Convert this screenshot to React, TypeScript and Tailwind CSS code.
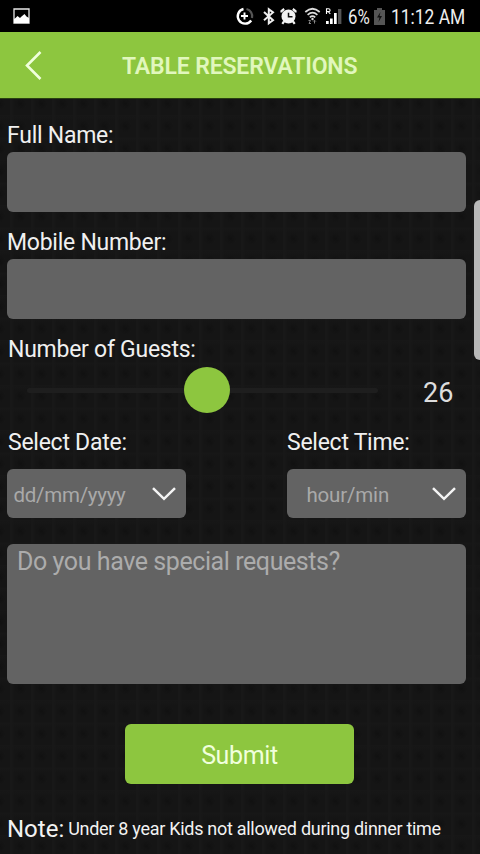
import React from "react";

function StatusIcons() {
  return (
    <svg className="h-[32px] w-[108px] shrink-0" viewBox="234 0 108 32" fill="none">
      <path d="M243.5 9A7.4 7.4 0 1 0 251.2 20.5" stroke="#fff" strokeWidth="2.4" />
      <path d="M246.5 9A7.4 7.4 0 0 1 252 18" stroke="#555" strokeWidth="2.2" />
      <path d="M244.5 12.5v7M241 16h7" stroke="#fff" strokeWidth="1.9" />
      <path d="M264 12l9 8.2-4.2 3V9.2l4.2 3.2-9 7.8" stroke="#eee" strokeWidth="2" />
      <circle cx="288.5" cy="16.5" r="7" fill="#f4f4f4" />
      <path d="M281.5 12.5v-1.5l2.7-2M295.5 12.5v-1.5l-2.7-2M284 21.5l-1.7 2.3M293 21.5l1.7 2.3" stroke="#f4f4f4" strokeWidth="2.2" />
      <path d="M288.5 12.8v4h4" stroke="#111" strokeWidth="1.5" />
      <path d="M305.3 12q7.2-6.5 14.4 0M307.6 14.8q4.9-4.4 9.8 0M309.8 17.3q2.7-2.4 5.4 0" stroke="#ddd" strokeWidth="1.7" />
      <circle cx="312.5" cy="19" r="1.2" fill="#ddd" />
      <path d="M308.5 20.5h2l-1.5 3h2M314.5 23.5v-3M313.2 21.5l1.3-1.3 1.3 1.3" stroke="#888" strokeWidth="1" />
      <path d="M326 24v-3h2.7v3zM330 24v-5.5h2.7V24zM334 24V13h2.7v11z" fill="#fff" />
      <path d="M338 24V9h3.4v15z" fill="#555" />
      <path d="M326.5 14V8.8h2q1.6 0 1.6 1.4t-1.6 1.4h-2M328.3 11.6l2 2.4" stroke="#fff" strokeWidth="1.1" />
    </svg>
  );
}

function StatusBar() {
  return (
    <div className="flex h-[32px] w-full items-center bg-black text-[20px] text-[#eee]">
      <svg className="ml-[13px] h-[16px] w-[17px] shrink-0" viewBox="0 0 17 16">
        <path d="M1 1h15v14H1z" fill="none" stroke="#e8e8e8" strokeWidth="1.3" />
        <path d="M1 15v-4l1.5-1L4.5 8 7 10l1.5-1.5L11.5 6l2 2.5L16 10v5z" fill="#fff" />
      </svg>
      <div className="ml-[204px]"><StatusIcons /></div>
      <span className="ml-[6px] mt-[2px] w-[21px] origin-left scale-x-[0.84] whitespace-nowrap">6%</span>
      <svg className="ml-[5px] h-[17px] w-[11px] shrink-0" viewBox="0 0 11 17">
        <path d="M3 0h5v2h3v15H0V2h3z" fill="#555" />
        <path d="M6.5 4L3 9.5h2.5L4.5 14 8 8H5.5z" fill="#111" />
      </svg>
      <span className="ml-[6px] mt-[2px] w-[75px] origin-left scale-x-[0.87] whitespace-nowrap">11:12 AM</span>
    </div>
  );
}

function Label({ children }: { children: React.ReactNode }) {
  return <div className="h-[28px] whitespace-nowrap text-[23px] leading-[29px] tracking-[-0.26px] text-[#f0f0f0]">{children}</div>;
}

function Picker({ text, inset }: { text: string; inset?: boolean }) {
  return (
    <div className="flex h-[49px] w-[179px] items-center justify-between rounded-[6px] bg-[#636363] pr-[10px]">
      <span className={inset ? "pl-[19.5px] pt-[3px] text-[20.5px] tracking-[-0.18px] text-[#a9a9a9]" : "pl-[6.5px] pt-[3px] text-[20.5px] tracking-[-0.28px] text-[#a9a9a9]"}>{text}</span>
      <svg className="h-[14px] w-[24px]" viewBox="0 0 24 14" fill="none">
        <path d="M1 1.2L12 11.8 23 1.2" stroke="#f4f4f4" strokeWidth="2.5" />
      </svg>
    </div>
  );
}

export default function App() {
  return (
    <div className="relative flex h-[854px] w-[480px] flex-col overflow-hidden bg-[#151515] font-[Roboto,sans-serif]">
      <StatusBar />
      <header className="flex h-[67px] items-center border-b border-[#294010] bg-[#8dc63f]">
        <svg className="ml-[24px] h-[30px] w-[20px]" viewBox="0 0 20 30" fill="none">
          <path d="M16.5 2L3 15.5 16.5 29" stroke="#f0ffdc" strokeWidth="2.6" />
        </svg>
        <h1 className="ml-[78px] mt-[3px] whitespace-nowrap text-[23px] font-semibold leading-[28px] tracking-[-0.15px] text-[#e1f7bd]">TABLE RESERVATIONS</h1>
      </header>
      <main className="flex-1 bg-[radial-gradient(circle_at_50%_50%,#0d0d0d99_0,#0d0d0d55_2px,transparent_6px),linear-gradient(90deg,#181818_1px,transparent_5px),linear-gradient(#171717_1px,transparent_5px)] bg-[size:21px_22.5px] bg-[position:10px_16px] pl-[7px] pr-[14px] pt-[22px]">
        <Label>Full Name:</Label>
        <div className="mt-[3px] h-[60px] rounded-[6px] bg-[#636363]" />
        <div className="mt-[16px]"><Label>Mobile Number:</Label></div>
        <div className="mt-[3px] h-[60px] rounded-[6px] bg-[#636363]" />
        <div className="mt-[16px] pl-px"><Label>Number of Guests:</Label></div>
        <div className="mt-[4px] flex h-[46px] items-center">
          <div className="ml-[20px] flex h-[5px] w-[351px] items-center rounded-full bg-[#1e1e1e]">
            <div className="ml-[157px] size-[46px] shrink-0 rounded-full bg-[#8dc63f]" />
          </div>
          <span className="ml-[45px] mt-[5px] text-[27px] leading-[32px] text-[#ddd]">26</span>
        </div>
        <div className="mt-[15px] flex justify-between">
          <div className="w-[179px] pl-px"><Label>Select Date:</Label></div>
          <div className="w-[179px]"><Label>Select Time:</Label></div>
        </div>
        <div className="mt-[13px] flex justify-between">
          <Picker text="dd/mm/yyyy" />
          <Picker text="hour/min" inset />
        </div>
        <div className="mt-[26px] h-[140px] rounded-[6px] bg-[#636363] pl-[10px] pt-[3px] text-[25px] leading-[30px] tracking-[-0.42px] text-[#acacac]">
          Do you have special requests?
        </div>
        <button className="ml-[118px] mt-[40px] block h-[60px] w-[229px] rounded-[6px] bg-[#8dc63f] pt-[3px] text-[25px] tracking-[-0.35px] text-[#f0ffdc]">Submit</button>
        <div className="mt-[30px] flex whitespace-nowrap leading-[30px] text-[#f2f2f2]">
          <span className="text-[24px]">Note:</span>
          <span className="ml-[4px] text-[18px] tracking-[-0.29px]">Under 8 year Kids not allowed during dinner time</span>
        </div>
      </main>
      <div className="absolute right-0 top-[200px] h-[160px] w-[6px] rounded-l-[6px] bg-[#b8b8b8]" />
    </div>
  );
}
